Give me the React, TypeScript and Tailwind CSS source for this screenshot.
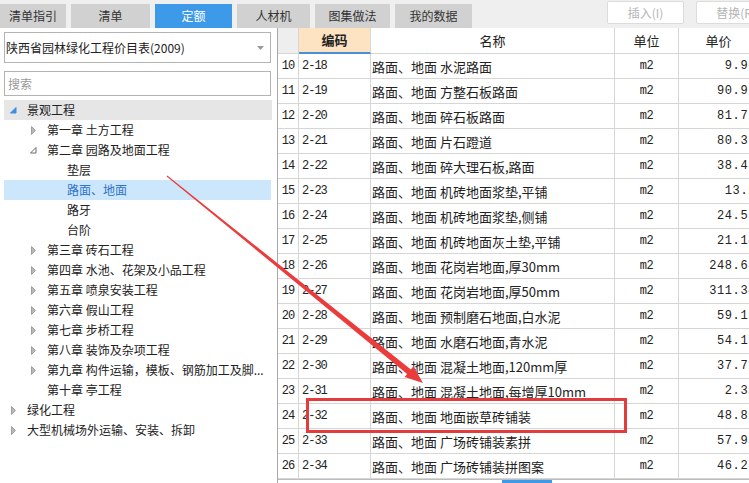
import React from 'react';

const cjk = "font-['Noto_Sans_CJK_SC',sans-serif]";
const mono = "font-['Liberation_Mono','Noto_Sans_CJK_SC',monospace]";

const TABS = [
  { label: '清单指引', w: 'w-[66px]' },
  { label: '清单', w: 'w-[79px]' },
  { label: '定额', w: 'w-[77px]', active: true },
  { label: '人材机', w: 'w-[73px]' },
  { label: '图集做法', w: 'w-[75px]' },
  { label: '我的数据', w: 'w-[77px]' },
];

type Node = { label: string; level: number; icon?: 'open' | 'closed'; state?: 'hover' | 'selected' };

const TREE: Node[] = [
  { label: '景观工程', level: 0, icon: 'open', state: 'hover' },
  { label: '第一章 土方工程', level: 1, icon: 'closed' },
  { label: '第二章 园路及地面工程', level: 1, icon: 'open' },
  { label: '垫层', level: 2 },
  { label: '路面、地面', level: 2, state: 'selected' },
  { label: '路牙', level: 2 },
  { label: '台阶', level: 2 },
  { label: '第三章 砖石工程', level: 1, icon: 'closed' },
  { label: '第四章 水池、花架及小品工程', level: 1, icon: 'closed' },
  { label: '第五章 喷泉安装工程', level: 1, icon: 'closed' },
  { label: '第六章 假山工程', level: 1, icon: 'closed' },
  { label: '第七章 步桥工程', level: 1, icon: 'closed' },
  { label: '第八章 装饰及杂项工程', level: 1, icon: 'closed' },
  { label: '第九章 构件运输，模板、钢筋加工及脚...', level: 1, icon: 'closed' },
  { label: '第十章 亭工程', level: 1 },
  { label: '绿化工程', level: 0, icon: 'closed' },
  { label: '大型机械场外运输、安装、拆卸', level: 0, icon: 'closed' },
];

const ROWS = [
  ['10', '2-18', '水泥路面', '9.96'],
  ['11', '2-19', '方整石板路面', '90.91'],
  ['12', '2-20', '碎石板路面', '81.72'],
  ['13', '2-21', '片石蹬道', '80.33'],
  ['14', '2-22', '碎大理石板,路面', '38.45'],
  ['15', '2-23', '机砖地面浆垫,平铺', '13.1'],
  ['16', '2-24', '机砖地面浆垫,侧铺', '24.53'],
  ['17', '2-25', '机砖地面灰土垫,平铺', '21.14'],
  ['18', '2-26', '花岗岩地面,厚30mm', '248.68'],
  ['19', '2-27', '花岗岩地面,厚50mm', '311.34'],
  ['20', '2-28', '预制磨石地面,白水泥', '59.12'],
  ['21', '2-29', '水磨石地面,青水泥', '54.17'],
  ['22', '2-30', '混凝土地面,120mm厚', '37.71'],
  ['23', '2-31', '混凝土地面,每增厚10mm', '2.35'],
  ['24', '2-32', '地面嵌草砖铺装', '48.86'],
  ['25', '2-33', '广场砖铺装素拼', '57.95'],
  ['26', '2-34', '广场砖铺装拼图案', '46.27'],
];

const indent = ['pl-[6px]', 'pl-[26px]', 'pl-[46px]'];

const TreeIcon: React.FC<{ icon?: 'open' | 'closed'; blue?: boolean }> = ({ icon, blue }) => (
  <span className="w-[17px] h-[20px] shrink-0 flex items-center">
    {icon === 'open' && (
      <svg width="7" height="7" viewBox="0 0 7 7">
        <polygon points="6,0.5 6,6 0.5,6" fill={blue ? '#3d8ee0' : '#ffffff'} stroke={blue ? '#3d8ee0' : '#6b6b6b'} strokeWidth="1" />
      </svg>
    )}
    {icon === 'closed' && (
      <svg width="6" height="9" viewBox="0 0 6 9" className="ml-[1px]">
        <polygon points="0.5,0.5 4.5,4.5 0.5,8.5" fill="#b8b8b8" stroke="#a0a0a0" strokeWidth="1" />
      </svg>
    )}
  </span>
);

const App: React.FC = () => {
  return (
    <div className={`relative w-[749px] h-[483px] overflow-hidden bg-white flex flex-col ${cjk}`}>
      {/* top bar */}
      <div className="h-[28px] shrink-0 bg-[#efefef] flex items-start overflow-hidden">
        <div className="flex gap-[5px] self-end shrink-0">
          {TABS.map((t) => (
            <div
              key={t.label}
              className={`${t.w} h-[24px] flex items-center justify-center text-[12px] leading-none ${
                t.active ? 'bg-[#3c9ae8] text-white' : 'bg-[#d1d1d1] text-[#333]'
              }`}
            >
              {t.label}
            </div>
          ))}
        </div>
        <div className="flex gap-[12px] ml-[135px] mt-[1px] shrink-0">
          <div className="w-[77px] h-[23px] bg-white border border-[#dcdcdc] rounded-[2px] flex items-center justify-center text-[12px] text-[#b5b5b5]">
            插入(I)
          </div>
          <div className="w-[80px] h-[23px] bg-white border border-[#dcdcdc] rounded-[2px] flex items-center justify-center text-[12px] text-[#b5b5b5]">
            替换(R)
          </div>
        </div>
      </div>

      <div className="flex flex-1 min-h-0">
        {/* left panel */}
        <div className="w-[278px] shrink-0 border-r border-[#a8a8a8] pl-[4px] pr-[6px] pt-[4px]">
          <div className="h-[31px] border border-[#b4b4b4] flex items-center justify-between pl-[1px] pr-[6px]">
            <span className="text-[12px] text-[#222] leading-none">陕西省园林绿化工程价目表(2009)</span>
            <svg width="7" height="4" viewBox="0 0 7 4">
              <polygon points="0,0 7,0 3.5,4" fill="#9a9a9a" />
            </svg>
          </div>
          <div className="mt-[8px] h-[25px] border border-[#b4b4b4] flex items-center pl-[3px] text-[12px] text-[#9a9a9a] leading-none">
            搜索
          </div>
          <div className="mt-[4px] -mr-[6px]">
            {TREE.map((n) => (
              <div
                key={n.label}
                className={`h-[20px] flex items-center text-[12px] leading-none ${indent[n.level]} ${
                  n.state === 'hover'
                    ? 'bg-[#e6e6e6] text-[#222] mr-[5px]'
                    : n.state === 'selected'
                    ? 'bg-[#cce6fb] text-[#2f73c9] mr-[6px]'
                    : 'text-[#222]'
                }`}
              >
                <TreeIcon icon={n.icon} blue={n.level === 0 && n.icon === 'open'} />
                <span className="whitespace-nowrap">{n.label}</span>
              </div>
            ))}
          </div>
        </div>

        {/* table */}
        <div className="flex-1 min-w-0 flex flex-col">
          <div className="w-[480px]">
            <div className="grid grid-cols-[21px_72px_244px_64px_79px] h-[26px] text-[13px] text-[#222]">
              <div className="bg-[#eeeeee] border-r border-b border-[#d6d6d6]" />
              <div className="bg-[#fde3c1] border-r border-[#d6d6d6] border-b-2 border-b-[#4a8fd6] flex items-center justify-center font-bold">
                编码
              </div>
              <div className="bg-white border-r border-b border-[#d6d6d6] flex items-center justify-center">名称</div>
              <div className="bg-white border-r border-b border-[#d6d6d6] flex items-center justify-center">单位</div>
              <div className="bg-white border-b border-[#d6d6d6] flex items-center justify-center">单价</div>
            </div>
            {ROWS.map(([no, code, name, price]) => (
              <div key={no} className="grid grid-cols-[21px_72px_244px_64px_79px] h-[25px] text-[#222]">
                <div className={`border-r border-b border-[#d6d6d6] flex items-center justify-center text-[12px] tracking-[-1px] ${mono}`}>
                  {no}
                </div>
                <div className={`border-r border-b border-[#d6d6d6] flex items-center pl-[3px] text-[12px] tracking-[-1px] ${mono}`}>
                  {code}
                </div>
                <div className="border-r border-b border-[#d6d6d6] flex items-center pl-[1px] text-[13px] leading-none whitespace-nowrap overflow-hidden">
                  路面、地面&nbsp;{name}
                </div>
                <div className={`border-r border-b border-[#d6d6d6] flex items-center justify-center text-[12px] tracking-[-0.5px] ${mono}`}>
                  m2
                </div>
                <div className={`border-b border-[#d6d6d6] flex items-center justify-end pr-[2px] text-[12px] tracking-[0.6px] ${mono}`}>
                  {price}
                </div>
              </div>
            ))}
            <div className="h-px bg-[#bdbdbd]" />
            <div className="h-[3px] flex">
              <div className="ml-[224px] w-[50px] bg-[#3c9ae8]" />
            </div>
          </div>
        </div>
      </div>

      {/* annotations */}
      <div className="absolute left-[306px] top-[398px] w-[321px] h-[35px] border-[3px] border-[#e23c3c]" />
      <svg className="absolute inset-0 pointer-events-none" width="749" height="483" viewBox="0 0 749 483">
        <polygon
          points="166.7,176.4 407.1,374.0 404.6,377.1 423,383 413.4,366.3 410.9,369.4 167.3,175.6"
          fill="#ec3b3b"
        />
      </svg>
    </div>
  );
};

export default App;
